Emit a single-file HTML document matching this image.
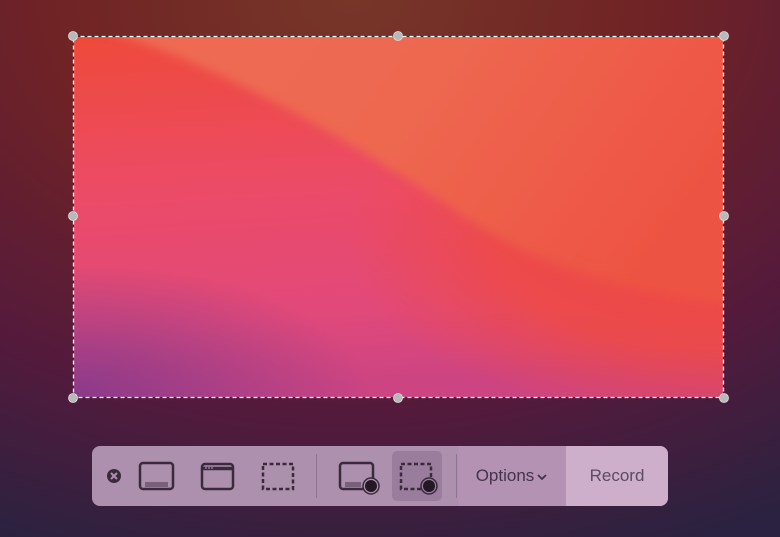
<!DOCTYPE html>
<html><head><meta charset="utf-8"><style>
html,body{margin:0;padding:0;width:780px;height:537px;overflow:hidden;font-family:"Liberation Sans",sans-serif}
#bg{position:absolute;left:0;top:0;width:780px;height:537px;}
.bar{position:absolute;left:92px;top:446px;width:576px;height:60px;border-radius:8px;background:#ad8fae;overflow:hidden}
.rec{position:absolute;right:0;top:0;width:102px;height:60px;background:#cdaecb;color:#5e4a63;font-size:17px;line-height:60px;text-align:center}
.opt{position:absolute;left:366px;top:0;width:108px;height:60px;background:#b392b4;color:#45334b;font-size:17px;line-height:60px;text-align:center}
.sel{position:absolute;left:300px;top:5px;width:50px;height:50px;border-radius:5px;background:#9a7d9c}
.sep{position:absolute;top:8px;width:1px;height:44px;background:#8f7592}
</style></head><body>
<svg id="bg" width="780" height="537" viewBox="0 0 780 537">
<defs>
<radialGradient id="g0" cx="0.45" cy="0" r="1.1">
<stop offset="0" stop-color="#773628"/><stop offset="0.35" stop-color="#702325"/><stop offset="0.7" stop-color="#541a3c"/><stop offset="1" stop-color="#2a2240"/>
</radialGradient>
<linearGradient id="g1" x1="0" y1="0" x2="0.1" y2="1">
<stop offset="0" stop-color="#ee4a3a"/><stop offset="0.45" stop-color="#ec4b68"/><stop offset="0.8" stop-color="#e0497a"/><stop offset="1" stop-color="#cc4482"/>
</linearGradient>
<radialGradient id="gp" cx="0" cy="362" r="300" gradientUnits="userSpaceOnUse" gradientTransform="translate(0,362) scale(1,0.45) translate(0,-362)">
<stop offset="0" stop-color="#8a3a8a"/><stop offset="1" stop-color="#8a3a8a" stop-opacity="0"/>
</radialGradient>
<radialGradient id="g2" cx="651" cy="200" r="380" gradientUnits="userSpaceOnUse" gradientTransform="translate(651,200) scale(1,0.5) translate(-651,-200)">
<stop offset="0" stop-color="#ee4a40"/><stop offset="0.6" stop-color="#ee4a44" stop-opacity="0.85"/><stop offset="1" stop-color="#ee4a48" stop-opacity="0"/>
</radialGradient>
<linearGradient id="g3" x1="0" y1="0" x2="1" y2="0.3">
<stop offset="0" stop-color="#ef6c54"/><stop offset="0.5" stop-color="#ee6850"/><stop offset="1" stop-color="#ed5242"/>
</linearGradient>
<filter id="bl"><feGaussianBlur stdDeviation="5"/></filter>
<clipPath id="cp"><rect width="651" height="362"/></clipPath>
</defs>
<rect width="780" height="537" fill="url(#g0)"/>
<g transform="translate(73,36)">
<g clip-path="url(#cp)">
<rect width="651" height="362" fill="url(#g1)"/>
<rect width="651" height="362" fill="url(#gp)"/>
<rect width="651" height="362" fill="url(#g2)"/>
<path d="M20,-10 C150,30 270,100 390,180 C480,240 580,262 700,272 L700,-10 Z" fill="url(#g3)" filter="url(#bl)"/>
</g>
<rect x="0.5" y="0.5" width="650" height="361" fill="none" stroke="#333" stroke-width="1"/>
<rect x="0.5" y="0.5" width="650" height="361" fill="none" stroke="#fff" stroke-width="1.3" stroke-dasharray="4 3"/>
</g>
<g fill="#b9b9b9" stroke="#e0e0e0" stroke-width="0.8">
<circle cx="73" cy="36" r="4.5"/><circle cx="398" cy="36" r="4.5"/><circle cx="724" cy="36" r="4.5"/>
<circle cx="73" cy="216" r="4.5"/><circle cx="724" cy="216" r="4.5"/>
<circle cx="73" cy="398" r="4.5"/><circle cx="398" cy="398" r="4.5"/><circle cx="724" cy="398" r="4.5"/>
</g>
</svg>
<div class="bar">
<div class="sel"></div>
<div class="sep" style="left:224px"></div>
<div class="sep" style="left:364px"></div>
<div class="opt">Options<svg width="12" height="10" viewBox="0 0 12 10" style="margin-left:2px;vertical-align:-1px"><path d="M2,3 L6,7 L10,3" fill="none" stroke="#45334b" stroke-width="1.8"/></svg></div>
<div class="rec">Record</div>
<svg width="576" height="60" style="position:absolute;left:0;top:0" fill="none" stroke="#3a2a3c">
<circle cx="22" cy="30" r="7" fill="#3a2a3c" stroke="none"/>
<path d="M19,27 L25,33 M25,27 L19,33" stroke="#ad8fae" stroke-width="2"/>
<rect x="48" y="17" width="33" height="26" rx="3" stroke-width="2.5"/>
<rect x="53" y="36" width="23" height="5" fill="#7a5f7c" stroke="none"/>
<rect x="110" y="18" width="31" height="25" rx="3" stroke-width="2.5"/>
<path d="M110,22.5 H141" stroke-width="3.5"/>
<g fill="#ad8fae" stroke="none"><circle cx="114" cy="22" r="0.9"/><circle cx="117" cy="22" r="0.9"/><circle cx="120" cy="22" r="0.9"/></g>
<rect x="171" y="18" width="30" height="25" stroke-width="2.5" stroke-dasharray="4 2.5"/>
<rect x="248" y="17" width="33" height="26" rx="3" stroke-width="2.5"/>
<rect x="253" y="36" width="16" height="5" fill="#7a5f7c" stroke="none"/>
<circle cx="279" cy="40" r="8" fill="#ad8fae" stroke="#3a2a3c" stroke-width="1.5"/>
<circle cx="279" cy="40" r="6" fill="#241826" stroke="none"/>
<rect x="309" y="18" width="30" height="25" stroke-width="2.5" stroke-dasharray="4 2.5"/>
<circle cx="337" cy="40" r="8" fill="#9a7d9c" stroke="#3a2a3c" stroke-width="1.5"/>
<circle cx="337" cy="40" r="6" fill="#241826" stroke="none"/>
</svg>
</div>
</body></html>
